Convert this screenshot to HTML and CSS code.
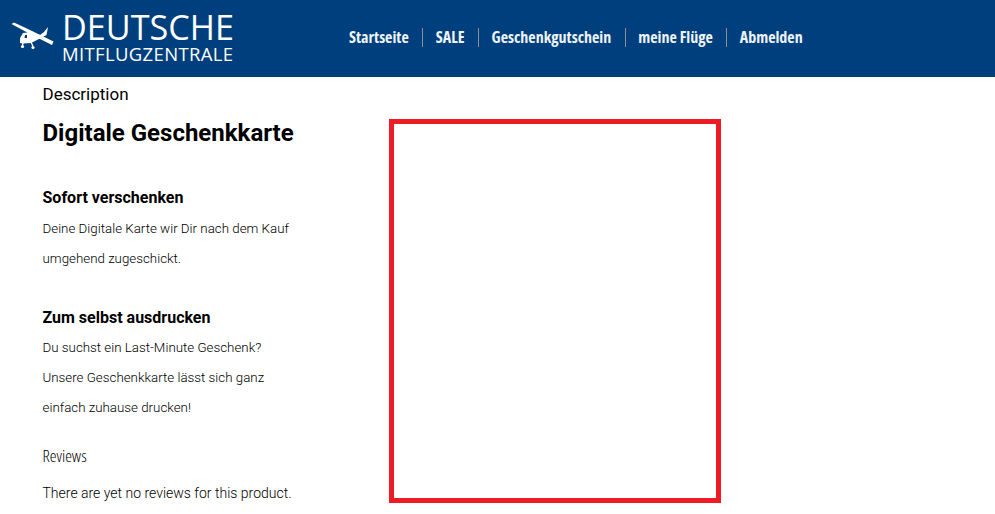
FILE: index.html
```html
<!DOCTYPE html>
<html lang="de">
<head>
<meta charset="utf-8">
<title>Digitale Geschenkkarte</title>
<link rel="stylesheet" href="styles.css">
</head>
<body>
<header class="topbar">
  <a class="logo" href="#">
    <svg class="plane" viewBox="0 0 44 28" width="44" height="28" aria-hidden="true">
      <path fill="#fff" d="M0.5 2 L3 0.5 L19 8 L42.5 19.5 L41 23 L25 15 L19 12 Z"/>
      <path fill="#fff" d="M12 11 L20 10 L29 13 L33 10 L37 5 L35.5 13 L29 16.5 L23 19.5 L20 21 L12 21.5 L9 21 L9 16 Z"/>
      <path fill="none" stroke="#fff" stroke-width="1.3" d="M12 20 L11.5 24 M20 20 L22 24.5"/>
      <circle cx="11.5" cy="24.5" r="1.6" fill="#fff"/>
      <circle cx="22" cy="25.5" r="1.6" fill="#fff"/>
      <path fill="#003f7d" d="M14 13 L16 13 L16 16 L13.5 16 Z"/>
    </svg>
    <span class="logo-text">
      <span class="logo-top">DEUTSCHE</span>
      <span class="logo-bottom">MITFLUGZENTRALE</span>
    </span>
  </a>
  <nav class="nav">
    <a href="#">Startseite</a>
    <a href="#">SALE</a>
    <a href="#">Geschenkgutschein</a>
    <a href="#">meine Flüge</a>
    <a href="#">Abmelden</a>
  </nav>
</header>
<main class="content">
  <section class="text">
    <h2 class="tab-title">Description</h2>
    <h1>Digitale Geschenkkarte</h1>
    <h3 class="first">Sofort verschenken</h3>
    <p>Deine Digitale Karte wir Dir nach dem Kauf<br>umgehend zugeschickt.</p>
    <h3 class="second">Zum selbst ausdrucken</h3>
    <p class="tight">Du suchst ein Last-Minute Geschenk?<br>Unsere Geschenkkarte lässt sich ganz<br>einfach zuhause drucken!</p>
    <h2 class="reviews">Reviews</h2>
    <p class="none">There are yet no reviews for this product.</p>
  </section>
  <div class="card-frame"></div>
</main>
</body>
</html>
```

FILE: styles.css
```css
* { box-sizing: border-box; }
html, body { margin: 0; padding: 0; background: #fff; overflow: hidden; }
body { font-family: Roboto, "Liberation Sans", sans-serif; color: #000; height: 514px; }
a { text-decoration: none; color: inherit; }

.topbar { height: 77px; background: #003f7d; display: flex; align-items: flex-start; }
.logo { width: 349px; flex: none; padding: 9px 0 0 11px; display: flex; color: #fff; }
.plane { margin: 13px 7px 0 0; flex: none; }
.logo-text { display: flex; flex-direction: column; }
.logo-top { font: 400 34.2px/36px "Open Sans", sans-serif; white-space: nowrap; }
.logo-bottom { font: 400 18.5px/17px "Open Sans", sans-serif; letter-spacing: 0.35px; white-space: nowrap; }

.nav { display: flex; align-items: center; padding-top: 28px; }
.nav a {
  font: 700 16px/19px "Open Sans", sans-serif; font-stretch: 75%;
  color: #eef3f8; padding: 0 13.5px 0 12.5px; border-left: 1px solid #8a8f8f;
}
.nav a:first-child { padding-left: 0; border-left: 0; }

.content { display: flex; align-items: flex-start; padding-left: 42.5px; }
.text { width: 346.5px; flex: none; }
.tab-title { margin: 7px 0 0; font-size: 17px; font-weight: 400; line-height: 21px; }
h1 { margin: 14px 0 0; font-size: 24px; font-weight: 700; line-height: 28px; }
h3 { margin: 0; font-size: 16px; font-weight: 700; line-height: 20px; }
h3.first { margin-top: 41px; }
h3.second { margin-top: 34px; }
p { margin: 6px 0 0; font-size: 13.33px; font-weight: 300; line-height: 30px; }
p.tight { margin-top: 5px; }
.reviews { margin: 23px 0 0; font: 300 17px/20px "Open Sans", sans-serif; font-stretch: 75%; }
p.none { margin: 17px 0 0; font-size: 14px; font-weight: 300; line-height: 20px; }
.card-frame { width: 332px; height: 384px; margin-top: 42px; border: 5px solid #ed1c24; background: #fff; flex: none; }
```
